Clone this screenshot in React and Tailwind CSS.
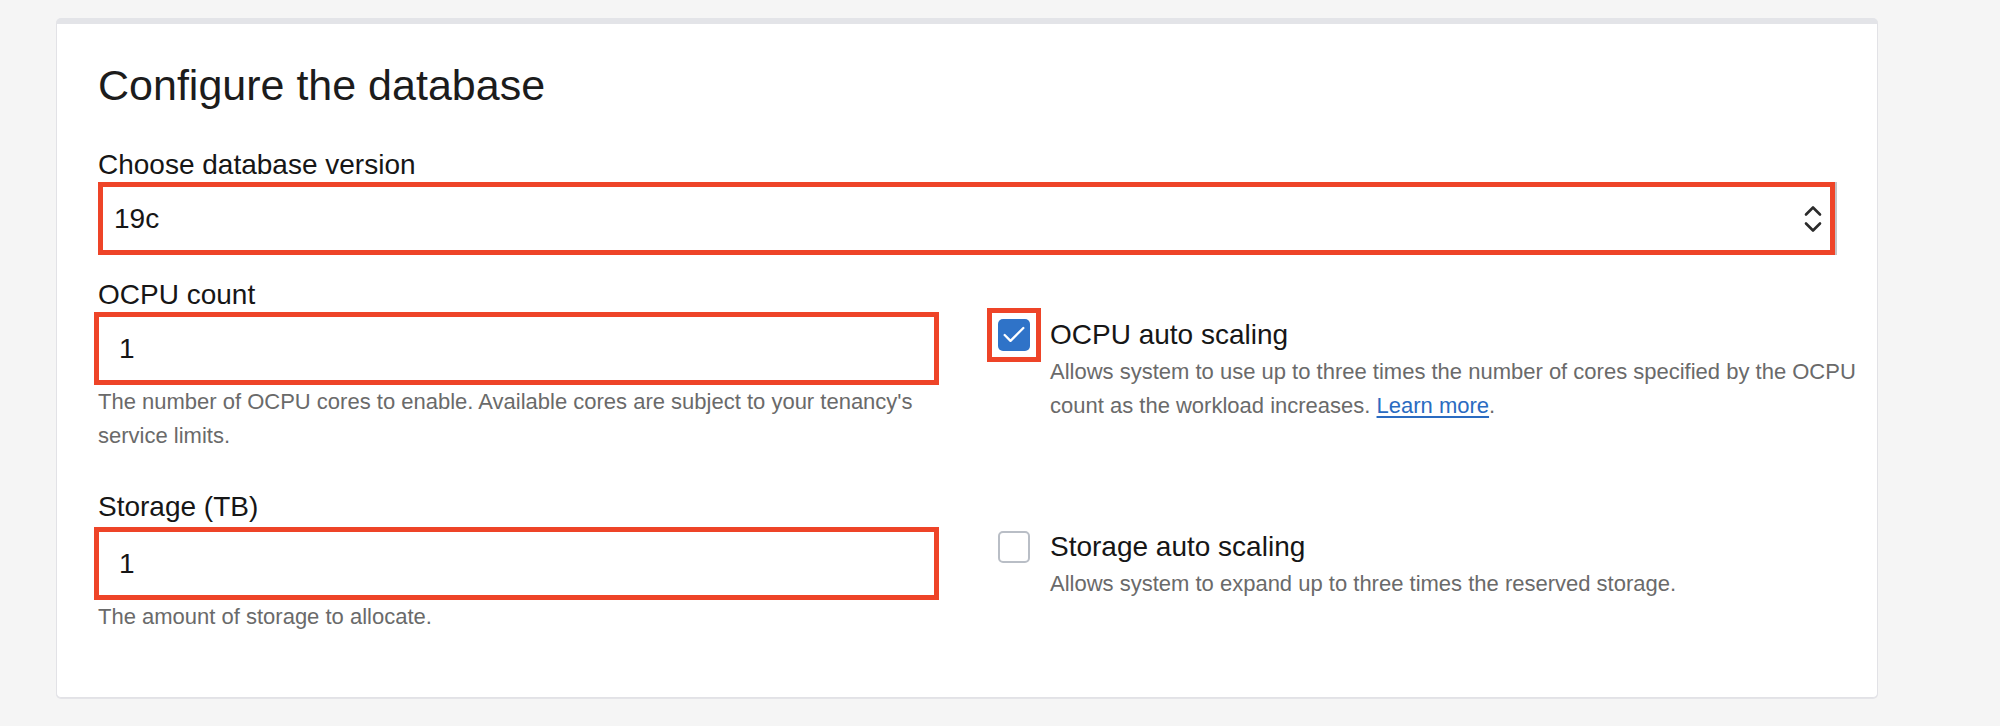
import { Check } from 'lucide-react';

function SelectChevrons() {
    return (
        <svg width="18" height="28" viewBox="0 0 18 28" fill="none" stroke="#2b2b2b" strokeWidth="2.6" strokeLinecap="round" strokeLinejoin="round">
            <path d="M2 9.5 L9 2.5 L16 9.5" />
            <path d="M2 18.5 L9 25.5 L16 18.5" />
        </svg>
    );
}

function TextField({ label, value, help, labelGap }) {
    return (
        <div>
            <label className="block text-[28px] leading-[32px] text-[#161616]">{label}</label>
            <div className={`-ml-[4px] w-[845px] h-[73px] border-[5px] border-[#ee4428] flex items-center pl-[20px] text-[28px] text-[#161616] ${labelGap}`}>
                {value}
            </div>
            <p className="text-[22px] leading-[34px] text-[#6a6a6a]">{help}</p>
        </div>
    );
}

function AutoScaling({ title, checked, highlight, children }) {
    const box = checked ? (
        <span className="flex items-center justify-center w-[32px] h-[32px] shrink-0 rounded-[5px] bg-[#2f73c8]">
            <Check size={28} strokeWidth={2} className="text-white" />
        </span>
    ) : (
        <span className="block w-[32px] h-[32px] shrink-0 rounded-[5px] border-2 border-[#b9bec6] bg-white" />
    );

    return (
        <div className="flex items-start gap-[20px] pt-[40px] pl-[12px]">
            {highlight ? (
                <span className="-m-[11px] p-[6px] border-[5px] border-[#ee4428] shrink-0">{box}</span>
            ) : box}
            <div>
                <div className="text-[28px] leading-[32px] text-[#161616]">{title}</div>
                <p className="mt-[4px] w-[820px] text-[22px] leading-[34px] text-[#6a6a6a]">{children}</p>
            </div>
        </div>
    );
}

export default function App() {
    return (
        <div className="min-h-screen bg-[#f5f5f5] pt-[18px] pl-[56px] font-['Liberation_Sans',Arial,sans-serif]">
            <div className="w-[1822px] bg-white border border-[#e2e2e6] border-t-[6px] border-t-[#e3e4e8] rounded-[5px] pl-[41px] pr-[42px] pt-[40px] pb-[63px] shadow-[0_1px_0_#e4e4e8]">
                <h2 className="text-[43px] leading-[43px] text-[#1c1c1c]">Configure the database</h2>

                {/* Database version */}
                <label className="block mt-[42px] text-[28px] leading-[32px] text-[#161616]">Choose database version</label>
                <div className="mt-[1px] h-[73px] border-[5px] border-[#ee4428] flex items-center justify-between pl-[11px] pr-[8px] text-[28px] text-[#161616] shadow-[2px_0_0_#c4c4c8]">
                    <span>19c</span>
                    <SelectChevrons />
                </div>

                <div className="grid grid-cols-[841px_1fr] gap-x-[47px] gap-y-[38px] mt-[24px]">
                    <TextField
                        label="OCPU count"
                        value="1"
                        labelGap="mt-[1px]"
                        help="The number of OCPU cores to enable. Available cores are subject to your tenancy's service limits."
                    />
                    <AutoScaling title="OCPU auto scaling" checked highlight>
                        Allows system to use up to three times the number of cores specified by the OCPU count as the workload increases.{' '}
                        <a href="#" className="text-[#2a6bc1] underline underline-offset-[3px]">Learn more</a>.
                    </AutoScaling>

                    <TextField
                        label="Storage (TB)"
                        value="1"
                        labelGap="mt-[4px]"
                        help="The amount of storage to allocate."
                    />
                    <AutoScaling title="Storage auto scaling">
                        Allows system to expand up to three times the reserved storage.
                    </AutoScaling>
                </div>
            </div>
        </div>
    );
}
